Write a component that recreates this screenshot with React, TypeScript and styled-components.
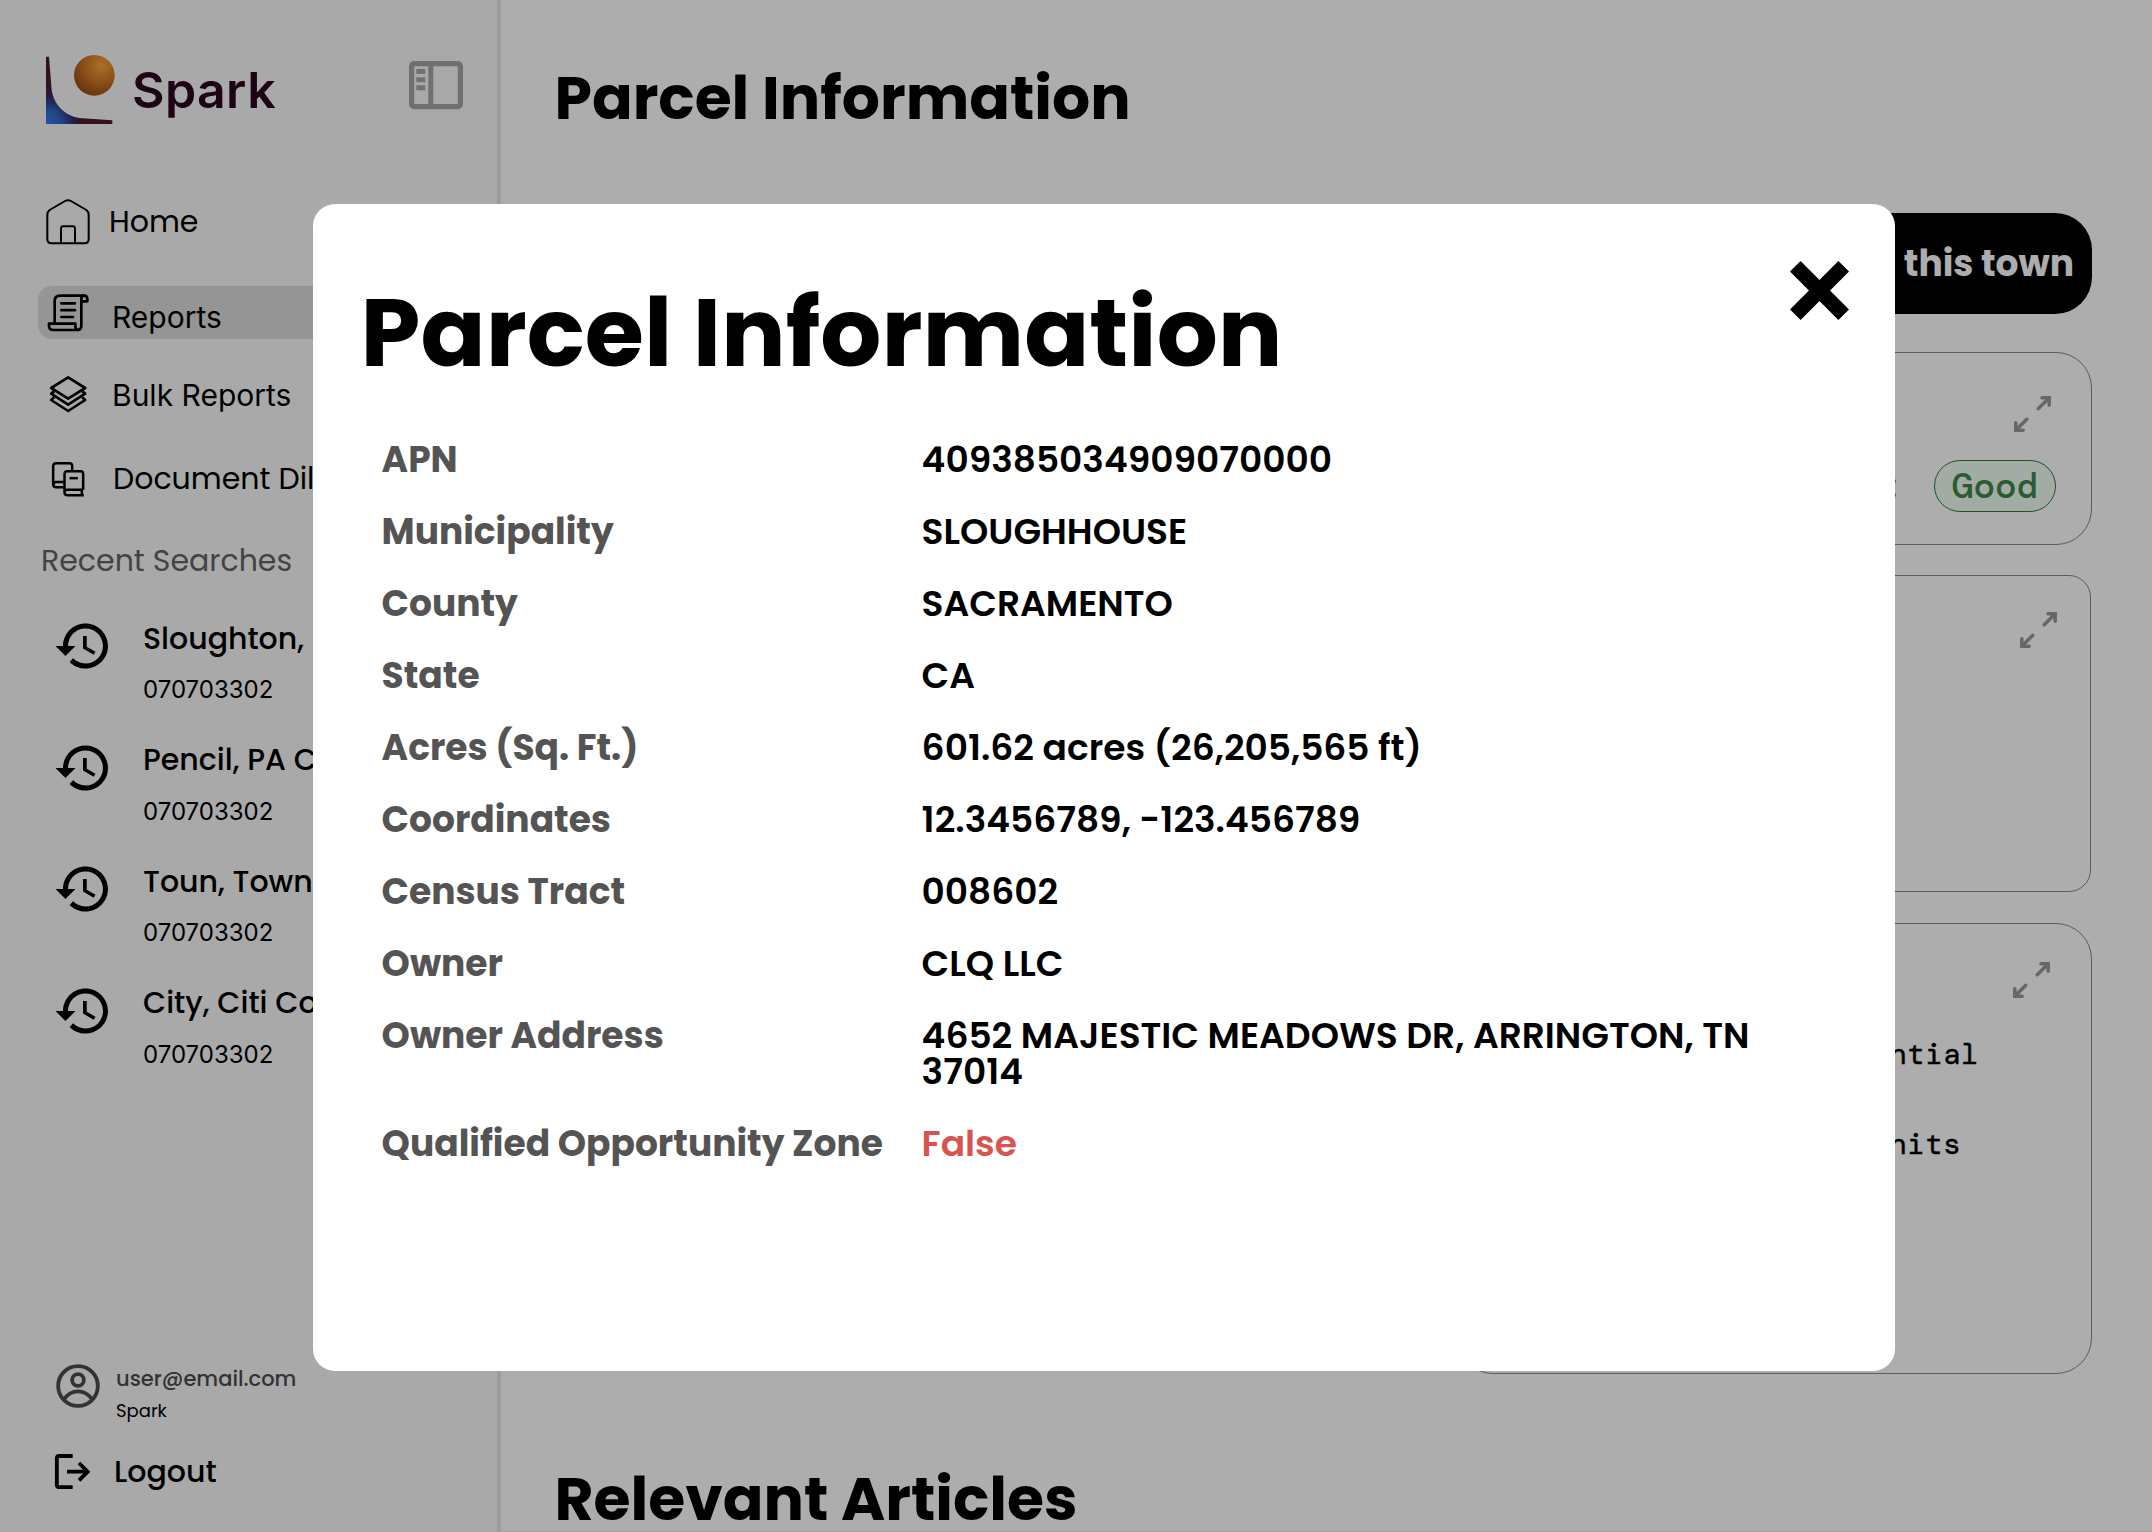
import React from 'react';
import styled, { createGlobalStyle } from 'styled-components';

const GlobalStyle = createGlobalStyle`
  * { box-sizing: border-box; }
  html, body { margin: 0; padding: 0; }
  body { width: 2152px; height: 1532px; overflow: hidden; background: #fff; color: #000; font-family: Poppins, Inter, sans-serif; }
  h1, h2, p, dl, dt, dd, ul { margin: 0; padding: 0; }
  svg { display: block; flex: none; overflow: visible; }
`;

/* ---------- shell ---------- */

const Page = styled.div`
  display: flex;
  width: 2152px;
  height: 1532px;
  overflow: hidden;
`;

const Sidebar = styled.aside`
  display: flex;
  flex-direction: column;
  flex: none;
  width: 501px;
  height: 1532px;
  padding: 55px 0 43px 38px;
  background: #fafafa;
  border-right: 4px solid #e2e6ec;
`;

const Brand = styled.div`
  display: flex;
  align-items: flex-start;
  height: 69px;
  margin-bottom: 75px;
  padding: 0 34px 0 8px;
`;

const BrandName = styled.span`
  margin: 10px auto 0 17px;
  font: 600 50px/50px Inter, sans-serif;
  letter-spacing: 0.4px;
  color: #2c0720;
`;

const ToggleButton = styled.button`
  margin-top: 6px;
  padding: 0;
  border: 0;
  background: none;
`;

const NavRow = styled.div<{ $height: number; $gap: number; $active?: boolean }>`
  display: flex;
  align-items: center;
  width: 424px;
  height: ${(p) => p.$height}px;
  margin-bottom: ${(p) => p.$gap}px;
  border-radius: 14px;
  background: ${(p) => (p.$active ? '#dcdcdc' : 'transparent')};
`;

const IconSlot = styled.span`
  display: flex;
  justify-content: center;
  flex: none;
  width: 60px;
`;

const NavLabel = styled.span<{ $plain?: boolean; $indent: number; $drop?: number }>`
  margin-left: ${(p) => p.$indent}px;
  padding-top: ${(p) => p.$drop ?? 0}px;
  font: 400 30px/30px ${(p) => (p.$plain ? 'Inter' : 'Poppins')}, sans-serif;
  white-space: nowrap;
`;

const SectionLabel = styled.h2`
  margin: 0 0 40px 3px;
  font-size: 30px;
  line-height: 30px;
  font-weight: 400;
  color: #646464;
`;

const Recent = styled.div`
  display: flex;
  height: 121.5px;
  padding-left: 15px;
`;

const RecentText = styled.div`
  display: flex;
  flex-direction: column;
  gap: 24.5px;
  margin: 7.6px 0 0 30px;
  white-space: nowrap;
`;

const RecentTitle = styled.span`
  font-size: 30px;
  line-height: 30px;
  font-weight: 500;
`;

const RecentCode = styled.span`
  font: 400 24px/24px Inter, sans-serif;
`;

const Account = styled.div`
  display: flex;
  height: 44px;
  margin-top: auto;
  margin-bottom: 46px;
  padding-left: 18px;
`;

const AccountText = styled.div`
  display: flex;
  flex-direction: column;
  gap: 13px;
  margin: 4px 0 0 16px;
`;

const Email = styled.span`
  font-size: 21px;
  line-height: 21px;
  font-weight: 500;
  color: #4c4c4c;
`;

const Org = styled.span`
  font-size: 18px;
  line-height: 18px;
`;

const Logout = styled.div`
  display: flex;
  align-items: center;
  gap: 24px;
  height: 35px;
  padding-left: 17px;
  font-size: 30px;
  line-height: 30px;
  font-weight: 500;
`;

/* ---------- main ---------- */

const Main = styled.main`
  display: flex;
  flex-direction: column;
  flex: 1;
  min-width: 0;
  padding: 68px 60px 0 53.5px;
  border-bottom: 1px solid #f0f0f0;
`;

const PageTitle = styled.h1`
  font-size: 60px;
  line-height: 60px;
  font-weight: 700;
`;

const Column = styled.div`
  display: flex;
  flex-direction: column;
  align-self: flex-end;
  width: 635px;
  margin: 85px 0 95px;
`;

const TownButton = styled.div`
  display: flex;
  align-items: center;
  justify-content: flex-end;
  height: 101px;
  margin-bottom: 38px;
  padding: 1px 18px 0;
  border-radius: 37px;
  background: #000;
  color: #fff;
  font-size: 36px;
  line-height: 36px;
  font-weight: 700;
`;

const Card = styled.section<{ $height: number; $radius: number; $gap: number; $pad: string }>`
  display: flex;
  flex-direction: column;
  align-items: flex-end;
  height: ${(p) => p.$height}px;
  margin-bottom: ${(p) => p.$gap}px;
  padding: ${(p) => p.$pad};
  border: 1px solid #868686;
  border-radius: ${(p) => p.$radius}px;
`;

const InsetCard = styled(Card)`
  margin-right: 1px;
`;

const StatusRow = styled.div`
  display: flex;
  align-items: center;
  gap: 31px;
  margin: 27px -5px 0 0;
  font: 500 36px/36px 'DM Mono', 'Liberation Mono', monospace;
`;

const StatusPill = styled.span`
  display: flex;
  align-items: center;
  justify-content: center;
  width: 122px;
  height: 52px;
  border: 1px solid #2f7a3e;
  border-radius: 26px;
  background: #f0fdf4;
  color: #3f874c;
`;

const UseList = styled.div`
  display: flex;
  flex-direction: column;
  align-self: stretch;
  gap: 60px;
  margin-top: 40px;
  font: 400 30px/30px 'DM Mono', 'Liberation Mono', monospace;
  -webkit-text-stroke: 0.4px #000;
`;

const UseItem = styled.span<{ $end: number }>`
  align-self: flex-end;
  margin-right: ${(p) => p.$end}px;
`;

/* ---------- dialog ---------- */

const Overlay = styled.div`
  position: fixed;
  inset: 0;
  display: flex;
  padding: 203.5px 257px 161.5px 312.6px;
  background: rgba(0, 0, 0, 0.32);
`;

const Dialog = styled.div`
  display: flex;
  flex-direction: column;
  flex: 1;
  padding: 57px 46px 0 47px;
  border-radius: 22px;
  background: #fff;
`;

const DialogHead = styled.div`
  display: flex;
  align-items: flex-start;
  justify-content: space-between;
  height: 181px;
`;

const DialogTitle = styled.h2`
  margin: 24px 0 0 1px;
  font-size: 96px;
  line-height: 96px;
  font-weight: 700;
`;

const CloseButton = styled.button`
  padding: 0;
  border: 0;
  background: none;
`;

const Details = styled.dl`
  display: grid;
  grid-template-columns: 540px 860px;
  row-gap: 36px;
  padding-left: 22px;
  font-size: 36px;
  line-height: 36px;
`;

const Term = styled.dt`
  font-weight: 700;
  color: #545454;
  white-space: nowrap;
`;

const Value = styled.dd<{ $alert?: boolean }>`
  font-weight: 600;
  color: ${(p) => (p.$alert ? '#d9534f' : '#000')};
`;

/* ---------- icons ---------- */

const Logo = () => (
  <svg width="69" height="69" viewBox="138 165 207 207">
    <defs>
      <radialGradient id="sweep" gradientUnits="userSpaceOnUse" cx="140" cy="372" r="120">
        <stop offset="0" stopColor="#2e80fb" />
        <stop offset="0.35" stopColor="#2f66c4" />
        <stop offset="0.7" stopColor="#35265c" />
        <stop offset="1" stopColor="#4e1a2e" />
      </radialGradient>
      <radialGradient id="sun" gradientUnits="userSpaceOnUse" cx="304" cy="196" r="96">
        <stop offset="0" stopColor="#f8a73b" />
        <stop offset="0.5" stopColor="#cf7a26" />
        <stop offset="1" stopColor="#9a4c18" />
      </radialGradient>
    </defs>
    <path d="M138 170H147L155 270C162 318 200 352 248 355L337 361V372H138Z" fill="url(#sweep)" />
    <circle cx="283" cy="226" r="61" fill="url(#sun)" />
  </svg>
);

const PanelIcon = () => (
  <svg width="54" height="48" viewBox="0 0 54 48" fill="#a6a6a6">
    <rect x="2.6" y="2.6" width="48.8" height="43" rx="2.5" fill="none" stroke="#a6a6a6" strokeWidth="5.2" />
    <path d="M19.3 3h5v42h-5zM7.3 8h9v5h-9zM7.3 16.200h9v5h-9zM7.3 24.300h9v5h-9z" />
  </svg>
);

const HomeIcon = () => (
  <svg width="44" height="46" viewBox="138 596 132 138" fill="none" stroke="#000" strokeWidth="6">
    <path d="M142 643Q142 634 149 629L195 602Q204 597 213 602L259 629Q266 634 266 643V717Q266 729 254 729H154Q142 729 142 717Z" />
    <path d="M183 729V685Q183 678 190 678H218Q225 678 225 685V729" />
  </svg>
);

const ScrollIcon = () => (
  <svg width="42" height="38" viewBox="141 881 126 114" fill="none" stroke="#000" strokeWidth="8" strokeLinecap="round" strokeLinejoin="round">
    <path d="M164 968V902Q164 886 180 886H252Q262 886 262 896V903H244" />
    <path d="M252 886Q244 886 244 896V976Q244 989 231 989H160Q147 989 147 976V970H226V976Q226 989 236 989" />
    <path d="M184 909H225M184 929.500H225M184 950H219" />
  </svg>
);

const LayersIcon = () => (
  <svg width="37" height="37" viewBox="149.500 52 111 111" fill="none" stroke="#000" strokeWidth="8" strokeLinejoin="round">
    <path d="M204 56L255 88L204 120L153 88Z" />
    <path d="M162 98L153 105L204 138L255 105L246 98" />
    <path d="M162 116L153 124L204 157L255 124L246 116" />
  </svg>
);

const DocsIcon = () => (
  <svg width="33" height="35" viewBox="155.500 305 99 105" fill="none" stroke="#000" strokeWidth="7.500" strokeLinejoin="round">
    <path d="M216 332V317Q216 309 208 309H168Q159 309 159 318V372Q159 381 168 381H191M160 373Q160 365 168 365H191" />
    <path d="M249 388V341Q249 333 241 333H202Q193 333 193 342V396Q193 405 202 405H251M193 396Q193 388 202 388H249M245 388V405" />
    <path d="M208 353.500H233" />
  </svg>
);

const HistoryIcon = () => (
  <svg width="60" height="60" viewBox="0 0 24 24">
    <path d="M13 3c-4.970 0-9 4.030-9 9H1l3.890 3.890.07.14L9 12H6c0-3.870 3.130-7 7-7s7 3.130 7 7-3.130 7-7 7c-1.930 0-3.680-.79-4.940-2.060l-1.420 1.420C8.270 19.990 10.510 21 13 21c4.970 0 9-4.030 9-9s-4.030-9-9-9zm-1 5v5l4.280 2.540.72-1.210-3.500-2.080V8H12z" />
  </svg>
);

const AccountIcon = () => (
  <svg width="44" height="44" viewBox="167 73 132 132" fill="none" stroke="#4c4c4c" strokeWidth="11.500">
    <circle cx="233" cy="139" r="59.500" />
    <circle cx="233" cy="121" r="17.500" />
    <path d="M190 179Q208 155 233 155T276 179" />
  </svg>
);

const LogoutIcon = () => (
  <svg width="35" height="35" viewBox="165 342 105 105" fill="none" stroke="#000" strokeWidth="11.500">
    <path d="M218 348H178Q170.500 348 170.500 355V434Q170.500 441.500 178 441.500H218" />
    <path d="M201 395H262M237 369L263 395L237 421" />
  </svg>
);

const ExpandIcon = () => (
  <svg width="37" height="37" viewBox="0 0 37 37" fill="none" stroke="#999" strokeWidth="3.500" strokeLinecap="round" strokeLinejoin="miter">
    <path d="M24.200 12.700L34.500 2.400M28 1.800H35.200V9.300" />
    <path d="M12.800 23.300L2.500 33.600M9.200 34.200H1.800V26.700" />
  </svg>
);

const CloseIcon = () => (
  <svg width="59" height="59" viewBox="0 0 59 59" stroke="#000" strokeWidth="15">
    <path d="M5.300 5.300L53.700 53.700M53.700 5.300L5.300 53.700" />
  </svg>
);

/* ---------- data ---------- */

const recents = ['Sloughton, PA', 'Pencil, PA Co', 'Toun, Town', 'City, Citi Co'];

const details: [string, string][] = [
  ['APN', '409385034909070000'],
  ['Municipality', 'SLOUGHHOUSE'],
  ['County', 'SACRAMENTO'],
  ['State', 'CA'],
  ['Acres (Sq. Ft.)', '601.62 acres (26,205,565 ft)'],
  ['Coordinates', '12.3456789, -123.456789'],
  ['Census Tract', '008602'],
  ['Owner', 'CLQ LLC'],
  ['Owner Address', '4652 MAJESTIC MEADOWS DR, ARRINGTON, TN 37014'],
  ['Qualified Opportunity Zone', 'False'],
];

export default function App() {
  return (
    <>
      <GlobalStyle />
      <Page>
        <Sidebar>
          <Brand>
            <Logo />
            <BrandName>Spark</BrandName>
            <ToggleButton aria-label="Toggle sidebar"><PanelIcon /></ToggleButton>
          </Brand>
          <NavRow $height={46} $gap={41}>
            <IconSlot><HomeIcon /></IconSlot>
            <NavLabel $indent={11}>Home</NavLabel>
          </NavRow>
          <NavRow $height={53} $gap={37} $active>
            <IconSlot><ScrollIcon /></IconSlot>
            <NavLabel $plain $indent={14} $drop={9}>Reports</NavLabel>
          </NavRow>
          <NavRow $height={37} $gap={47}>
            <IconSlot><LayersIcon /></IconSlot>
            <NavLabel $plain $indent={14}>Bulk Reports</NavLabel>
          </NavRow>
          <NavRow $height={38} $gap={48}>
            <IconSlot><DocsIcon /></IconSlot>
            <NavLabel $indent={15}>Document Dil</NavLabel>
          </NavRow>
          <SectionLabel>Recent Searches</SectionLabel>
          {recents.map((title) => (
            <Recent key={title}>
              <HistoryIcon />
              <RecentText>
                <RecentTitle>{title}</RecentTitle>
                <RecentCode>070703302</RecentCode>
              </RecentText>
            </Recent>
          ))}
          <Account>
            <AccountIcon />
            <AccountText>
              <Email>user@email.com</Email>
              <Org>Spark</Org>
            </AccountText>
          </Account>
          <Logout><LogoutIcon />Logout</Logout>
        </Sidebar>
        <Main>
          <PageTitle>Parcel Information</PageTitle>
          <Column>
            <TownButton>this town</TownButton>
            <Card $height={193} $radius={36} $gap={30} $pad="43px 40px 0 0">
              <ExpandIcon />
              <StatusRow>:<StatusPill>Good</StatusPill></StatusRow>
            </Card>
            <InsetCard $height={317} $radius={22} $gap={31} $pad="36px 33px 0 0">
              <ExpandIcon />
            </InsetCard>
            <Card $height={451} $radius={36} $gap={0} $pad="38px 41px 0 0">
              <ExpandIcon />
              <UseList>
                <UseItem $end={71}>ntial</UseItem>
                <UseItem $end={89}>nits</UseItem>
              </UseList>
            </Card>
          </Column>
          <PageTitle as="h2">Relevant Articles</PageTitle>
        </Main>
      </Page>
      <Overlay>
        <Dialog role="dialog">
          <DialogHead>
            <DialogTitle>Parcel Information</DialogTitle>
            <CloseButton aria-label="Close"><CloseIcon /></CloseButton>
          </DialogHead>
          <Details>
            {details.map(([term, value]) => (
              <React.Fragment key={term}>
                <Term>{term}</Term>
                <Value $alert={value === 'False'}>{value}</Value>
              </React.Fragment>
            ))}
          </Details>
        </Dialog>
      </Overlay>
    </>
  );
}
